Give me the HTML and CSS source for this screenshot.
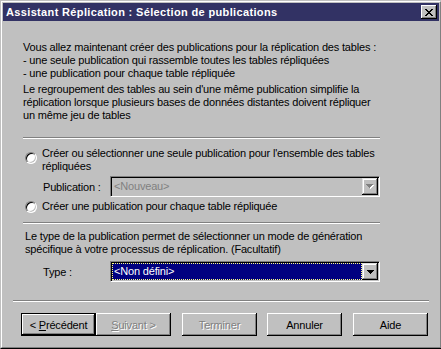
FILE: index.html
```html
<!DOCTYPE html>
<html lang="fr">
<head>
<meta charset="utf-8">
<title>Assistant Réplication</title>
<link rel="stylesheet" href="styles.css">
</head>
<body>
<div class="window">
  <div class="frame">
    <div class="titlebar">
      <span class="title">Assistant Réplication : Sélection de publications</span>
      <span class="close"><svg width="8" height="7" viewBox="0 0 8 7" shape-rendering="crispEdges"><path d="M0 0h2v1H0zM6 0h2v1H6zM1 1h2v1H1zM5 1h2v1H5zM2 2h4v1H2zM3 3h2v1H3zM2 4h4v1H2zM1 5h2v1H1zM5 5h2v1H5zM0 6h2v1H0zM6 6h2v1H6z" fill="#000"/></svg></span>
    </div>
    <div class="client">
      <div class="page">
        <p class="text">Vous allez maintenant créer des publications pour la réplication des tables :<br>- une seule publication qui rassemble toutes les tables répliquées<br>- une publication pour chaque table répliquée</p>
        <p class="text gap">Le regroupement des tables au sein d'une même publication simplifie la<br>réplication lorsque plusieurs bases de données distantes doivent répliquer<br>un même jeu de tables</p>
        <div class="sep sep1"></div>
        <div class="radio-row r1"><span class="radio"></span><span class="radio-label">Créer ou sélectionner une seule publication pour l'ensemble des tables<br>répliquées</span></div>
        <div class="field-row pub">
          <span class="field-label">Publication :</span>
          <div class="combo disabled">
            <span class="combo-text">&lt;Nouveau&gt;</span>
            <span class="combo-btn"><svg width="8" height="5" viewBox="0 0 8 5" shape-rendering="crispEdges"><path d="M1 1h7v1h-1v1h-1v1h-1v1h-1v-1h-1v-1h-1v-1h-1z" fill="#fff"/><path d="M0 0h7v1h-1v1h-1v1h-1v1h-1v-1h-1v-1h-1v-1h-1z" fill="#808080"/></svg></span>
          </div>
        </div>
        <div class="radio-row r2"><span class="radio"></span><span class="radio-label">Créer une publication pour chaque table répliquée</span></div>
        <div class="sep sep2"></div>
        <p class="text type-text">Le type de la publication permet de sélectionner un mode de génération<br>spécifique à votre processus de réplication. (Facultatif)</p>
        <div class="field-row type">
          <span class="field-label">Type :</span>
          <div class="combo">
            <span class="combo-text selected">&lt;Non défini&gt;</span>
            <span class="combo-btn"><svg width="7" height="4" viewBox="0 0 7 4" shape-rendering="crispEdges"><path d="M0 0h7v1h-1v1h-1v1h-1v1h-1v-1h-1v-1h-1v-1h-1z" fill="#000"/></svg></span>
          </div>
        </div>
      </div>
      <div class="sep bottom-sep"></div>
      <div class="buttons">
        <span class="btn default"><span>&lt; <u>P</u>récédent</span></span>
        <span class="btn disabled"><span><u>S</u>uivant &gt;</span></span>
        <span class="btn disabled gap-l"><span>Terminer</span></span>
        <span class="btn gap-m"><span>Annuler</span></span>
        <span class="btn gap-l"><span>Aide</span></span>
      </div>
    </div>
  </div>
</div>
</body>
</html>
```

FILE: styles.css
```css
* { box-sizing: border-box; }
html, body { margin: 0; padding: 0; }
body {
  width: 441px;
  height: 349px;
  overflow: hidden;
  background: #c0c0c0;
  font-family: "Liberation Sans", Arial, sans-serif;
  font-size: 11px;
  letter-spacing: -0.18px;
  color: #000;
}
.window {
  width: 442px;
  height: 349px;
  background: #c0c0c0;
  border: 1px solid;
  border-color: #c0c0c0 #000 #000 #c0c0c0;
  display: flex;
  flex-direction: column;
}
.frame {
  flex: 1;
  border: 1px solid;
  border-color: #fff #808080 #808080 #fff;
  padding: 1px;
  display: flex;
  flex-direction: column;
}
.titlebar {
  height: 18px;
  flex: none;
  background: #323264;
  display: flex;
  align-items: center;
  justify-content: space-between;
  padding: 0 2px 0 3px;
}
.title {
  color: #fff;
  font-weight: bold;
  font-size: 11px;
  letter-spacing: 0.35px;
  white-space: nowrap;
}
.close {
  width: 16px;
  height: 14px;
  background: #c0c0c0;
  box-shadow: inset -1px -1px #000, inset 1px 1px #fff, inset -2px -2px #808080;
  display: flex;
  align-items: center;
  justify-content: center;
  padding-right: 1px;
}
.close svg { display: block; }
.client { flex: 1; display: flex; flex-direction: column; }
.page { padding: 20px 0 0 20px; width: 377px; }
.text { margin: 0; line-height: 13px; white-space: nowrap; }
.gap { margin-top: 3px; }
.sep { height: 2px; border-top: 1px solid #808080; border-bottom: 1px solid #fff; }
.sep1 { margin-top: 15px; }
.radio-row { display: flex; align-items: flex-start; line-height: 13px; white-space: nowrap; }
.r1 { margin-top: 8px; }
.r2 { margin-top: 3px; }
.radio {
  flex: none;
  width: 12px;
  height: 12px;
  margin: 5px 5px 0 2px;
  border-radius: 50%;
  background: #fff;
  border: 1px solid;
  border-color: #808080 #fff #fff #808080;
  box-shadow: inset 1px 1px #000, inset -1px -1px #c0c0c0;
}
.r2 .radio { margin-top: 1px; }
.field-row { display: flex; align-items: center; padding-left: 20px; }
.field-label { width: 67px; flex: none; white-space: nowrap; }
.pub { margin-top: 3px; }
.sep2 { margin-top: 9px; }
.type-text { margin-top: 6px; padding-left: 2px; }
.type { margin-top: 5px; }
.combo {
  width: 270px;
  height: 21px;
  border: 1px solid;
  border-color: #808080 #fff #fff #808080;
  box-shadow: inset 1px 1px #000, inset -1px -1px #c0c0c0;
  padding: 1px;
  display: flex;
  background: #fff;
}
.combo.disabled { background: #c0c0c0; color: #808080; }
.combo-text {
  flex: 1;
  padding-left: 2px;
  line-height: 17px;
  white-space: nowrap;
}
.combo-text.selected {
  background: #000080;
  color: #fff;
  outline: 1px dotted #ffff80;
  outline-offset: -1px;
}
.combo-btn {
  flex: none;
  width: 16px;
  height: 17px;
  background: #c0c0c0;
  box-shadow: inset -1px -1px #000, inset 1px 1px #dfdfdf, inset -2px -2px #808080, inset 2px 2px #fff;
  display: flex;
  align-items: center;
  justify-content: center;
}
.combo-btn svg { display: block; }
.bottom-sep { margin: 18px 0 0 10px; width: 416px; }
.buttons { display: flex; margin: 11px 0 0 18px; }
.btn {
  width: 75px;
  height: 23px;
  flex: none;
  display: flex;
  align-items: center;
  justify-content: center;
  background: #c0c0c0;
  box-shadow: inset -1px -1px #000, inset 1px 1px #fff, inset -2px -2px #808080;
  white-space: nowrap;
}
.btn.default {
  border: 1px solid #000;
  box-shadow: inset -1px -1px #000, inset 1px 1px #fff, inset -2px -2px #808080;
}
.btn.disabled { color: #808080; text-shadow: 1px 1px 0 #fff; }
.gap-l { margin-left: 11px; }
.gap-m { margin-left: 10px; }
```
